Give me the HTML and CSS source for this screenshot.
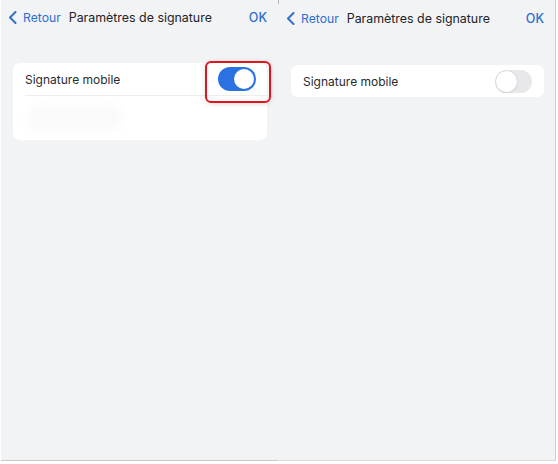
FILE: index.html
```html
<!DOCTYPE html>
<html lang="fr">
<head>
<meta charset="utf-8">
<link rel="stylesheet" href="styles.css">
</head>
<body>
<div class="shots">
  <section class="screen screen-left">
    <header class="nav">
      <span class="back">
        <svg class="chev" width="9" height="13" viewBox="0 0 9 13"><path d="M7.5 1 L2 6.5 L7.5 12" fill="none" stroke="currentColor" stroke-width="2" stroke-linecap="round" stroke-linejoin="round"/></svg>
        <span class="back-label">Retour</span>
      </span>
      <span class="title">Paramètres de signature</span>
      <span class="ok">OK</span>
    </header>
    <div class="card card-tall">
      <div class="row">
        <span class="label">Signature mobile</span>
        <span class="highlight"><span class="toggle on"><span class="knob"></span></span></span>
      </div>
      <div class="divider"></div>
      <div class="blur-area"><span class="blur"></span></div>
    </div>
  </section>
  <section class="screen screen-right">
    <header class="nav">
      <span class="back">
        <svg class="chev" width="9" height="13" viewBox="0 0 9 13"><path d="M7.5 1 L2 6.5 L7.5 12" fill="none" stroke="currentColor" stroke-width="2" stroke-linecap="round" stroke-linejoin="round"/></svg>
        <span class="back-label">Retour</span>
      </span>
      <span class="title">Paramètres de signature</span>
      <span class="ok">OK</span>
    </header>
    <div class="card">
      <div class="row">
        <span class="label">Signature mobile</span>
        <span class="toggle off"><span class="knob"></span></span>
      </div>
    </div>
  </section>
</div>
</body>
</html>
```

FILE: styles.css
```css
* { box-sizing: border-box; }
html, body { margin: 0; padding: 0; background: #ffffff; }
body {
  font-family: Inter, "Noto Sans", "Liberation Sans", sans-serif;
  width: 558px;
  height: 464px;
  overflow: hidden;
}
.shots {
  display: flex;
  padding-left: 1px;
}
.screen {
  background: #f2f3f5;
  height: 461px;
  display: flex;
  flex-direction: column;
}
.screen-left {
  width: 277px;
  border-bottom: 1px solid #c9c9c9;
}
.screen-right {
  width: 278px;
  border-bottom: 1px solid #dcdcdc;
  border-right: 1px solid #cfcfcf;
  border-left: 1px solid #f2f3f5;
  padding-top: 1px;
  position: relative;
}
.screen-right::before {
  content: "";
  position: absolute;
  left: -1px;
  top: 0;
  width: 1px;
  height: 4px;
  background: #b8b8b8;
}
.nav {
  display: flex;
  align-items: center;
  height: 35px;
  padding: 0 11px 0 7px;
  font-size: 12.2px;
}
.back {
  display: flex;
  align-items: center;
  color: #2f6fcf;
}
.chev { display: block; margin-right: 6px; }
.back-label { margin-right: 8px; }
.title { color: #222226; flex: 1; font-size: 12.4px; }
.ok { color: #2f6fcf; font-weight: 500; font-size: 12.5px; }
.card {
  background: #ffffff;
  border-radius: 7px;
  margin: 28px 11px 0 12px;
  display: flex;
  flex-direction: column;
}
.screen-right .card { margin-top: 29px; }
.row {
  display: flex;
  align-items: center;
  justify-content: space-between;
  height: 32px;
  padding: 0 12px;
}
.card-tall .row { height: 32px; padding-right: 11px; }
.label { color: #2b2b2e; font-size: 12px; }
.divider {
  height: 1px;
  background: #ededef;
  margin-left: 12px;
}
.blur-area {
  height: 44px;
  padding: 9px 0 0 14px;
}
.blur {
  display: block;
  width: 96px;
  height: 26px;
  border-radius: 13px;
  background: #fafafb;
  filter: blur(4px);
}
.toggle {
  position: relative;
  display: block;
  width: 38px;
  height: 24px;
  border-radius: 12px;
}
.toggle.on { background: #2a72e2; }
.toggle.off { background: #e8e8ea; width: 37px; height: 23px; }
.knob {
  position: absolute;
  top: 2px;
  width: 20px;
  height: 20px;
  border-radius: 50%;
  background: #ffffff;
}
.toggle.on .knob { right: 2px; }
.toggle.off .knob {
  left: 1px;
  top: 1px;
  width: 21px;
  height: 21px;
  box-shadow: 0 0 0 0.5px #d4d4d6, 0 1px 2px rgba(0,0,0,0.12);
}
.highlight {
  position: relative;
  display: block;
}
.highlight::after {
  content: "";
  position: absolute;
  left: -13px;
  top: -6px;
  width: 62px;
  height: 38px;
  border: 2px solid #e4141e;
  border-radius: 6px;
  box-shadow: 0 1px 5px rgba(0,0,0,0.14);
  pointer-events: none;
}
```
